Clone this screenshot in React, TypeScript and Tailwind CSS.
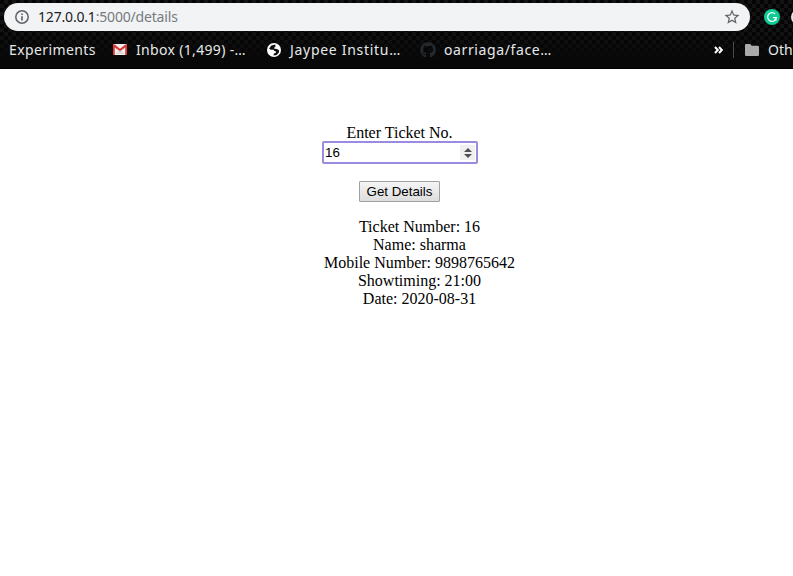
import type { ReactNode } from "react";
import { FaGithub } from "react-icons/fa";

function InfoIcon() {
  return (
    <svg className="block h-[14px] w-[14px]" viewBox="0 0 14 14" fill="none" stroke="#5f6368">
      <circle cx="7" cy="7" r="6.2" strokeWidth="1.5" />
      <path d="M7 6.2v4.2M7 3.4v1.5" strokeWidth="1.7" />
    </svg>
  );
}

function StarIcon() {
  return (
    <svg className="block h-[18px] w-[18px]" viewBox="0 0 24 24" fill="#5f6368">
      <path d="M22 9.24l-7.19-.62L12 2 9.19 8.63 2 9.24l5.46 4.73L5.82 21 12 17.27 18.18 21l-1.63-7.03L22 9.24zM12 15.4l-3.76 2.27 1-4.28-3.32-2.88 4.38-.38L12 6.1l1.71 4.04 4.38.38-3.32 2.88 1 4.28L12 15.4z" />
    </svg>
  );
}

function GrammarlyIcon() {
  return (
    <svg className="block h-4 w-4" viewBox="0 0 16 16" fill="none">
      <circle cx="8" cy="8" r="8" fill="#0fcb94" />
      <path d="M11.2 4.9A4.4 4.4 0 1 0 12.4 8.6H9M10.2 11h1.7V8.8" stroke="white" strokeWidth="1.3" />
    </svg>
  );
}

function MailIcon() {
  return (
    <svg className="block h-[11px] w-[14px]" viewBox="0 0 14 11">
      <rect width="14" height="11" rx=".7" fill="#f1efef" />
      <path d="M2.5 10 7 5.7 11.5 10" fill="#d8d6d6" />
      <path d="M0 .6Q.6-.1 1.4.3L7 4.7 12.6.3Q13.4-.1 14 .6V11h-1.8V3.4L7 7.2 1.8 3.4V11H0z" fill="#d93a36" />
    </svg>
  );
}

function GlobeIcon() {
  return (
    <svg className="block h-[14px] w-[14px]" viewBox="0 0 14 14">
      <circle cx="7" cy="7" r="7" fill="#fff" />
      <path d="M8.3 1.6 4.3 2.6 2.1 5.5l1.6 1.3h3l.5 1.3 1.5.1.4 1.3-2.3 1.3-.3 1.6 3.2-.5 2.2-2.4.2-2.1-2-1.5-2.6-.1-.6-1 1.5-.8z" fill="#111" />
    </svg>
  );
}

function FolderIcon() {
  return (
    <svg className="block h-3 w-[14px]" viewBox="0 0 14 12" fill="#aaa">
      <path d="M0 1.2Q0 0 1.2 0h4L6.7 1.7h6.1Q14 1.7 14 2.9v7.9Q14 12 12.8 12H1.2Q0 12 0 10.8z" />
    </svg>
  );
}

function Bookmark({ icon, children, className }: { icon?: ReactNode; children: ReactNode; className: string }) {
  return (
    <div className={`flex shrink-0 items-center whitespace-nowrap ${className}`}>
      {icon}
      <span>{children}</span>
    </div>
  );
}

export default function App() {
  return (
    <div className="h-[576px] w-[793px] overflow-hidden bg-white">
      <header className="h-[69px] overflow-hidden border-b border-black bg-[#080808] bg-[linear-gradient(to_bottom,transparent_0px,transparent_30px,#080808_60px),conic-gradient(#131313_25%,#050505_0_50%,#131313_0_75%,#050505_0)] bg-[size:100%_100%,8px_8px] font-['Noto_Sans',sans-serif]">
        <div className="flex h-[31px] pt-[3px] pl-1">
          <div className="flex h-7 w-[746px] shrink-0 items-center rounded-full bg-[#f1f3f4] pr-[9px] pl-[11px]">
            <InfoIcon />
            <span className="ml-[9px] text-[14px] leading-7 tracking-[-0.18px] text-[#777b80]">
              <span className="text-[#202124]">127.0.0.1</span>:5000/details
            </span>
            <span className="ml-auto"><StarIcon /></span>
          </div>
          <div className="ml-[14px] mt-[6px] shrink-0"><GrammarlyIcon /></div>
          <div className="ml-[11px] mt-[6px] h-4 w-4 shrink-0 rounded-full bg-[#e5e5e5]" />
        </div>
        <nav className="flex h-[37px] items-center pl-[9px] text-[14px] text-[#e5e8e9]">
          <Bookmark className="w-[104px] tracking-[0.4px]">Experiments</Bookmark>
          <Bookmark className="w-[154px] gap-[9px] tracking-[0.33px]" icon={<MailIcon />}>Inbox (1,499) -…</Bookmark>
          <Bookmark className="w-[153px] gap-[9px] tracking-[0.7px]" icon={<GlobeIcon />}>Jaypee Institu…</Bookmark>
          <Bookmark className="w-[294px] gap-2 tracking-[0.62px]" icon={<FaGithub className="h-4 w-4 text-[#24292e]" />}>oarriaga/face…</Bookmark>
          <svg className="block h-2 w-[9px] shrink-0" viewBox="0 0 9 8" fill="none" stroke="#fff" strokeWidth="2">
            <path d="m1 1 2.8 3L1 7M5 1l2.8 3L5 7" />
          </svg>
          <div className="ml-[10px] h-4 w-px shrink-0 bg-[#4b4b4b]" />
          <Bookmark className="ml-[11px] gap-[9px]" icon={<FolderIcon />}>Oth</Bookmark>
        </nav>
      </header>
      <main className="pt-[55px] font-['Liberation_Serif',serif] text-[16px] leading-[18px] text-black">
        <form className="ml-[322px] flex w-[155px] flex-col items-center" onSubmit={(event) => event.preventDefault()}>
          <label htmlFor="ticket" className="h-[17px] whitespace-nowrap">Enter Ticket No.</label>
          <div className="flex h-[23px] w-[156px] shrink-0 items-center self-start rounded-[2px] border-2 border-[#9b8be0] bg-white pr-px pl-px">
            <input id="ticket" defaultValue="16" className="h-[17px] w-[135px] bg-transparent font-['Liberation_Sans',sans-serif] text-[13.333px] outline-none" />
            <span className="ml-auto flex h-[15px] w-[15px] items-center justify-center bg-[#f0f0f0]">
              <svg className="block h-[10px] w-2" viewBox="0 0 8 10" fill="#505050"><path d="M4 0 8 4H0zM0 6h8L4 10z" /></svg>
            </span>
          </div>
          <button className="mt-[17px] h-[21px] w-[81px] rounded-[1px] whitespace-nowrap border border-[#a0a0a0] bg-linear-to-b from-[#f5f5f5] to-[#dddddd] font-['Liberation_Sans',sans-serif] text-[13.333px] leading-[19px]">Get Details</button>
        </form>
        <div className="ml-[322px] mt-4 w-[195px] text-center whitespace-nowrap">
          <p>Ticket Number: 16</p>
          <p>Name: sharma</p>
          <p>Mobile Number: 9898765642</p>
          <p>Showtiming: 21:00</p>
          <p>Date: 2020-08-31</p>
        </div>
      </main>
    </div>
  );
}
